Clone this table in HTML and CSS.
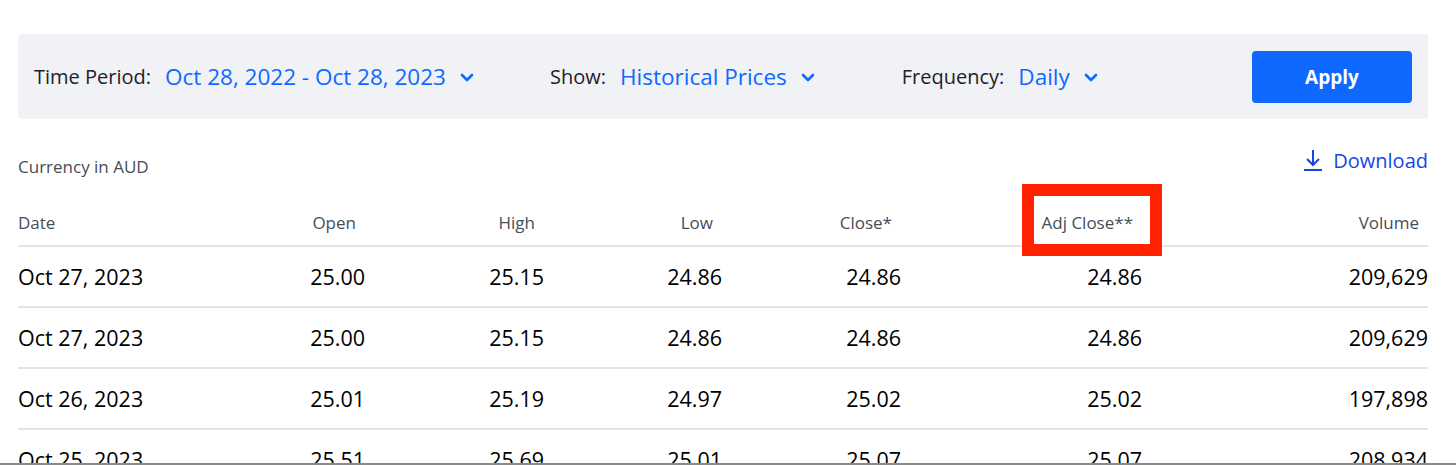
FILE: index.html
```html
<!DOCTYPE html>
<html lang="en">
<head>
    <meta charset="UTF-8">
    <title>Historical Data</title>
    <link rel="stylesheet" href="styles.css">
</head>
<body>
    <div class="filters">
        <div class="filter">
            <span class="label">Time Period:</span>
            <span class="value">Oct 28, 2022 - Oct 28, 2023</span>
            <svg class="chev" width="14" height="9" viewBox="0 0 14 9"><path d="M2 2l5 5 5-5" fill="none" stroke="#0f69ff" stroke-width="2.6" stroke-linecap="round" stroke-linejoin="round"/></svg>
        </div>
        <div class="filter show">
            <span class="label">Show:</span>
            <span class="value">Historical Prices</span>
            <svg class="chev" width="14" height="9" viewBox="0 0 14 9"><path d="M2 2l5 5 5-5" fill="none" stroke="#0f69ff" stroke-width="2.6" stroke-linecap="round" stroke-linejoin="round"/></svg>
        </div>
        <div class="filter freq">
            <span class="label">Frequency:</span>
            <span class="value">Daily</span>
            <svg class="chev" width="14" height="9" viewBox="0 0 14 9"><path d="M2 2l5 5 5-5" fill="none" stroke="#0f69ff" stroke-width="2.6" stroke-linecap="round" stroke-linejoin="round"/></svg>
        </div>
        <button class="apply">Apply</button>
    </div>

    <div class="meta">
        <span class="currency">Currency in AUD</span>
        <a class="download">
            <svg width="20" height="22" viewBox="0 0 20 22"><path d="M10 1v15M4 10l6 6 6-6M1 21h18" fill="none" stroke="#1447e6" stroke-width="2"/></svg>
            Download
        </a>
    </div>

    <div class="table">
        <div class="row head">
            <div class="cell left">Date</div>
            <div class="cell">Open</div>
            <div class="cell">High</div>
            <div class="cell">Low</div>
            <div class="cell">Close*</div>
            <div class="cell">Adj Close**</div>
            <div class="cell">Volume</div>
        </div>
        <div class="row">
            <div class="cell left">Oct 27, 2023</div>
            <div class="cell">25.00</div>
            <div class="cell">25.15</div>
            <div class="cell">24.86</div>
            <div class="cell">24.86</div>
            <div class="cell">24.86</div>
            <div class="cell">209,629</div>
        </div>
        <div class="row">
            <div class="cell left">Oct 27, 2023</div>
            <div class="cell">25.00</div>
            <div class="cell">25.15</div>
            <div class="cell">24.86</div>
            <div class="cell">24.86</div>
            <div class="cell">24.86</div>
            <div class="cell">209,629</div>
        </div>
        <div class="row">
            <div class="cell left">Oct 26, 2023</div>
            <div class="cell">25.01</div>
            <div class="cell">25.19</div>
            <div class="cell">24.97</div>
            <div class="cell">25.02</div>
            <div class="cell">25.02</div>
            <div class="cell">197,898</div>
        </div>
        <div class="row">
            <div class="cell left">Oct 25, 2023</div>
            <div class="cell">25.51</div>
            <div class="cell">25.69</div>
            <div class="cell">25.01</div>
            <div class="cell">25.07</div>
            <div class="cell">25.07</div>
            <div class="cell">208,934</div>
        </div>
    </div>

    <div class="highlight"></div>
    <div class="bottom-bar"></div>
</body>
</html>
```

FILE: styles.css
```css
body {
    margin: 0;
    padding: 34px 28px 0 18px;
    font-family: "Open Sans", Arial, sans-serif;
    color: #000;
    background: #fff;
    overflow: hidden;
}
.filters {
    display: flex;
    align-items: center;
    height: 85px;
    padding: 0 16px;
    background: #f0f2f5;
    border-radius: 4px;
}
.filter {
    display: flex;
    align-items: center;
    font-size: 20px;
}
.filter .label {
    color: #1d2228;
    margin-right: 14px;
}
.filter .value {
    color: #0f69ff;
    font-size: 22.5px;
}
.chev {
    margin-left: 14px;
    margin-top: 2px;
}
.show {
    margin-left: 76px;
}
.freq {
    margin-left: 87px;
}
.apply {
    margin-left: auto;
    width: 160px;
    height: 52px;
    border: none;
    border-radius: 4px;
    background: #0f69ff;
    color: #fff;
    font-family: inherit;
    font-size: 19px;
    font-weight: 700;
}
.meta {
    display: flex;
    justify-content: space-between;
    align-items: center;
    margin-top: 26px;
    height: 30px;
}
.currency {
    font-size: 17px;
    color: #464e56;
    margin-top: 12px;
}
.download {
    display: flex;
    align-items: center;
    gap: 10px;
    font-size: 20px;
    color: #1447e6;
}
.table {
    margin-top: 24px;
}
.row {
    display: grid;
    grid-template-columns: 168px 179px 179px 178px 179px 241px 1fr;
    align-items: center;
    height: 59px;
    border-bottom: 2px solid #e0e4e9;
    font-size: 21.5px;
    color: #000;
}
.row.head {
    height: 35px;
    align-items: end;
    padding-bottom: 11px;
    font-size: 17px;
    color: #464e56;
}
.row.head .cell {
    padding-right: 9px;
}
.row.head .cell.left {
    padding-right: 0;
}
.cell {
    text-align: right;
}
.cell.left {
    text-align: left;
}
.highlight {
    position: absolute;
    left: 1022px;
    top: 184px;
    width: 116px;
    height: 48px;
    border: 12px solid #ff2200;
}
.bottom-bar {
    position: fixed;
    left: 0;
    right: 0;
    bottom: 0;
    height: 2px;
    background: #8a8a8a;
}
```
